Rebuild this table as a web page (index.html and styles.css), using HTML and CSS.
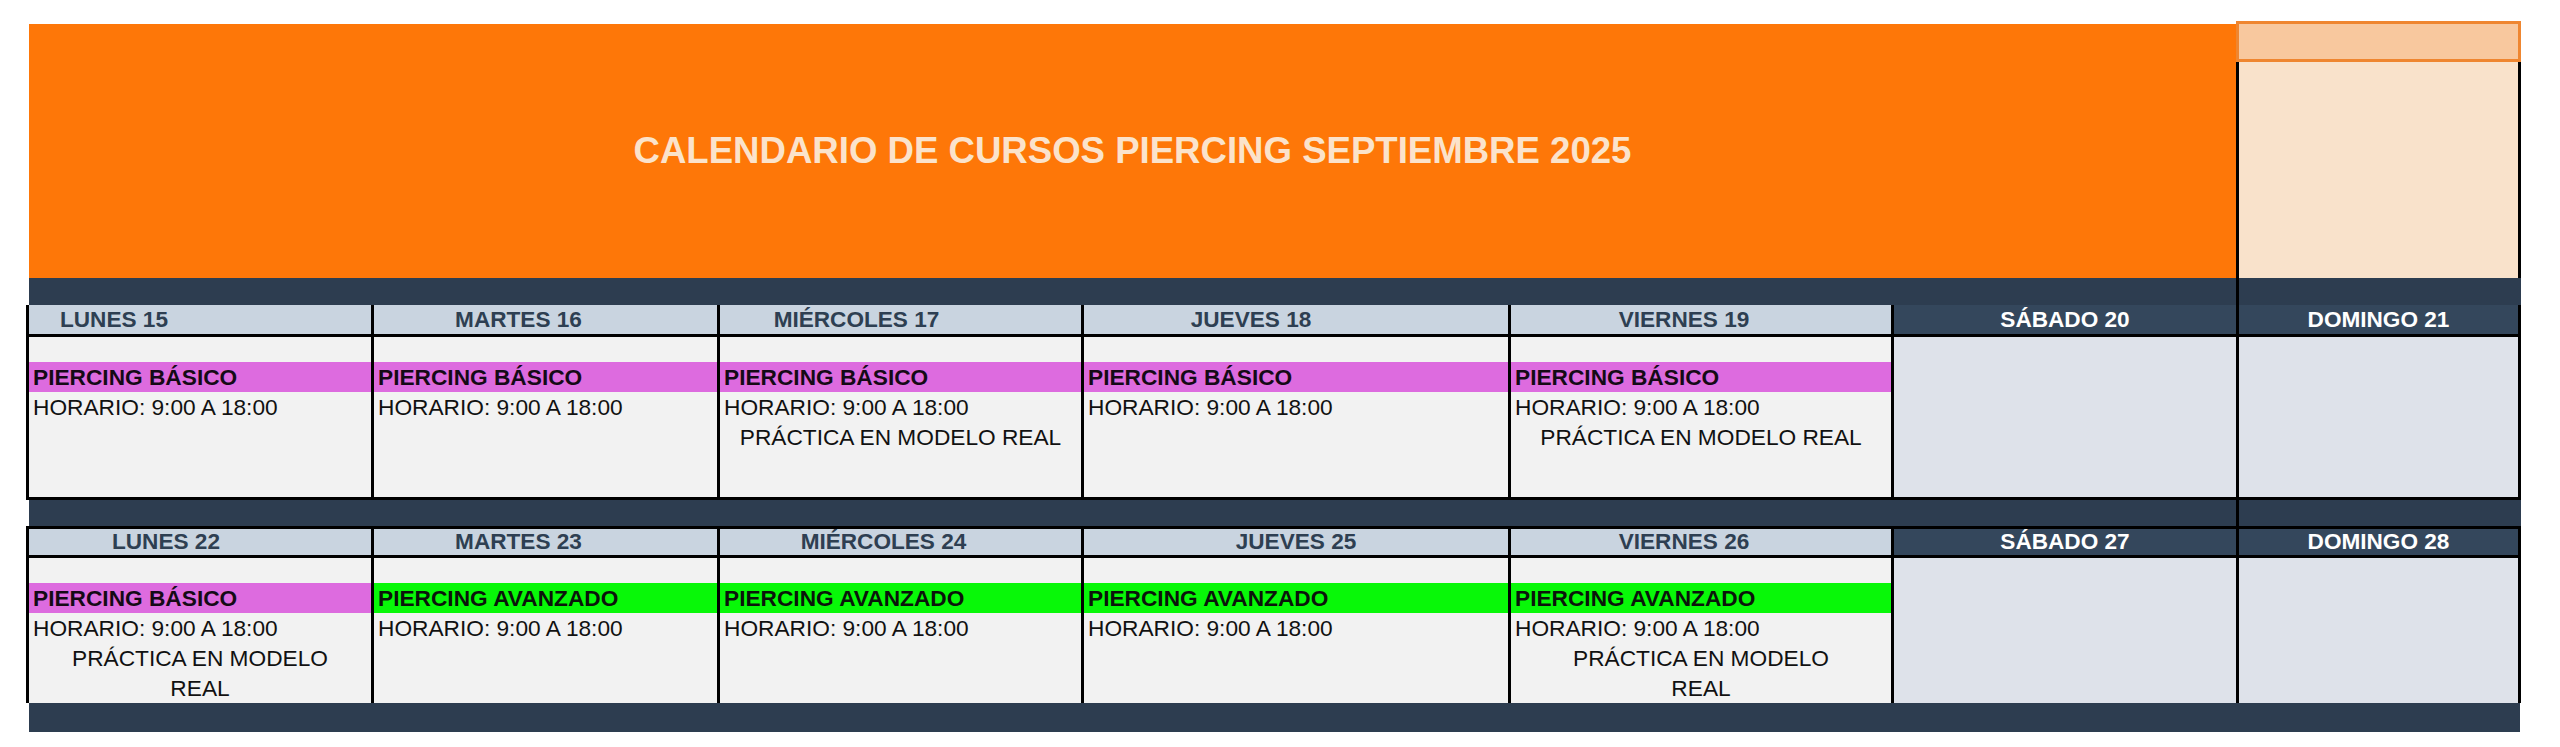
FILE: index.html
```html
<!DOCTYPE html>
<html lang="es">
<head>
<meta charset="utf-8">
<title>Calendario de cursos piercing septiembre 2025</title>
<link rel="stylesheet" href="styles.css">
</head>
<body>
<div class="page">
  <div class="top">
    <div class="banner"><h1 class="title">CALENDARIO DE CURSOS PIERCING SEPTIEMBRE 2025</h1></div>
    <div class="sun-top">
      <div class="strip"></div>
      <div class="peach"></div>
    </div>
  </div>

  <div class="bar bar-split"><div></div><div class="vline"></div><div></div></div>

  <div class="week week-1">
    <div class="hd hd-left">LUNES 15</div>
    <div class="hd shift-27">MARTES 16</div>
    <div class="hd shift-44">MIÉRCOLES 17</div>
    <div class="hd shift-45">JUEVES 18</div>
    <div class="hd shift-17">VIERNES 19</div>
    <div class="hd hd-dark">SÁBADO 20</div>
    <div class="hd hd-dark">DOMINGO 21</div>

    <div class="cell">
      <div class="course basic">PIERCING BÁSICO</div>
      <div class="line">HORARIO: 9:00 A 18:00</div>
    </div>
    <div class="cell">
      <div class="course basic">PIERCING BÁSICO</div>
      <div class="line">HORARIO: 9:00 A 18:00</div>
    </div>
    <div class="cell">
      <div class="course basic">PIERCING BÁSICO</div>
      <div class="line">HORARIO: 9:00 A 18:00</div>
      <div class="line center">PRÁCTICA EN MODELO REAL</div>
    </div>
    <div class="cell">
      <div class="course basic">PIERCING BÁSICO</div>
      <div class="line">HORARIO: 9:00 A 18:00</div>
    </div>
    <div class="cell">
      <div class="course basic">PIERCING BÁSICO</div>
      <div class="line">HORARIO: 9:00 A 18:00</div>
      <div class="line center">PRÁCTICA EN MODELO REAL</div>
    </div>
    <div class="cell cell-dark"></div>
    <div class="cell cell-dark"></div>
  </div>

  <div class="bar bar-split bar-mid"><div></div><div class="vline"></div><div></div></div>

  <div class="week week-2">
    <div class="hd shift-34">LUNES 22</div>
    <div class="hd shift-27">MARTES 23</div>
    <div class="hd shift-17">MIÉRCOLES 24</div>
    <div class="hd">JUEVES 25</div>
    <div class="hd shift-17">VIERNES 26</div>
    <div class="hd hd-dark">SÁBADO 27</div>
    <div class="hd hd-dark">DOMINGO 28</div>

    <div class="cell">
      <div class="course basic">PIERCING BÁSICO</div>
      <div class="line">HORARIO: 9:00 A 18:00</div>
      <div class="line center">PRÁCTICA EN MODELO<br>REAL</div>
    </div>
    <div class="cell">
      <div class="course adv">PIERCING AVANZADO</div>
      <div class="line">HORARIO: 9:00 A 18:00</div>
    </div>
    <div class="cell">
      <div class="course adv">PIERCING AVANZADO</div>
      <div class="line">HORARIO: 9:00 A 18:00</div>
    </div>
    <div class="cell">
      <div class="course adv">PIERCING AVANZADO</div>
      <div class="line">HORARIO: 9:00 A 18:00</div>
    </div>
    <div class="cell">
      <div class="course adv">PIERCING AVANZADO</div>
      <div class="line">HORARIO: 9:00 A 18:00</div>
      <div class="line center">PRÁCTICA EN MODELO<br>REAL</div>
    </div>
    <div class="cell cell-dark"></div>
    <div class="cell cell-dark"></div>
  </div>

  <div class="bar bar-end"></div>
</div>
</body>
</html>
```

FILE: styles.css
```css
* { box-sizing: border-box; }

html, body {
  margin: 0;
  padding: 0;
  background: #ffffff;
}

body {
  font-family: "Liberation Sans", Arial, sans-serif;
  color: #111111;
}

.page {
  padding-top: 21px;
  padding-left: 26px;
  width: 2521px;
}

/* ---------- top banner ---------- */
.top {
  display: grid;
  grid-template-columns: 2207px 285px;
  margin-left: 3px;
  height: 257px;
}

.banner {
  margin-top: 3px;
  background: #fe7708;
  display: flex;
  align-items: center;
  justify-content: center;
}

.title {
  margin: 0;
  font-size: 36.6px;
  font-weight: bold;
  color: #fbe3cb;
}

.sun-top {
  display: flex;
  flex-direction: column;
}

.strip {
  height: 41px;
  background: #f8c89e;
  border: 3px solid #ef8630;
}

.peach {
  flex: 1;
  background: #f9e2cb;
  border-left: 3px solid #000000;
  border-right: 3px solid #000000;
}

/* ---------- dark separator bars ---------- */
.bar {
  margin-left: 3px;
  width: 2492px;
  background: #2d3d50;
}

.bar-split {
  display: grid;
  grid-template-columns: 2207px 3px 1fr;
  height: 27px;
}

.bar-mid { height: 26px; }

.vline { background: #000000; }

.bar-end {
  height: 29px;
  width: 2491px;
}

/* ---------- week grids ---------- */
.week {
  display: grid;
  grid-template-columns: 342px 343px 361px 424px 380px 342px 279px;
  gap: 3px;
  background: #000000;
  border-left: 3px solid #000000;
  border-right: 3px solid #000000;
  width: 2495px;
}

.week-1 {
  grid-template-rows: 29px 160px;
  border-bottom: 3px solid #000000;
}

.week-2 {
  grid-template-rows: 26px 145px;
  border-top: 3px solid #000000;
}

.hd {
  background: #c9d4e0;
  color: #2e3f52;
  font-size: 22.6px;
  font-weight: bold;
  display: flex;
  align-items: center;
  justify-content: center;
  white-space: nowrap;
}

.hd-left {
  justify-content: flex-start;
  padding-left: 31px;
}

.shift-17 { padding-right: 34px; }
.shift-27 { padding-right: 54px; }
.shift-34 { padding-right: 68px; }
.shift-44 { padding-right: 88px; }
.shift-45 { padding-right: 90px; }

.hd-dark {
  background: #34475c;
  color: #ffffff;
}

.cell {
  background: #f2f2f2;
  padding-top: 25px;
  font-size: 22.7px;
}

.cell-dark { background: #dee2ea; }

.course {
  height: 30px;
  line-height: 30px;
  padding-left: 4px;
  font-weight: bold;
  color: #150a16;
  white-space: nowrap;
}

.basic { background: #dd6bdf; }
.adv { background: #08f808; color: #0b140b; }

.line {
  line-height: 30px;
  padding-left: 4px;
  color: #111111;
  white-space: nowrap;
}

.center {
  text-align: center;
  padding-left: 0;
}
```
